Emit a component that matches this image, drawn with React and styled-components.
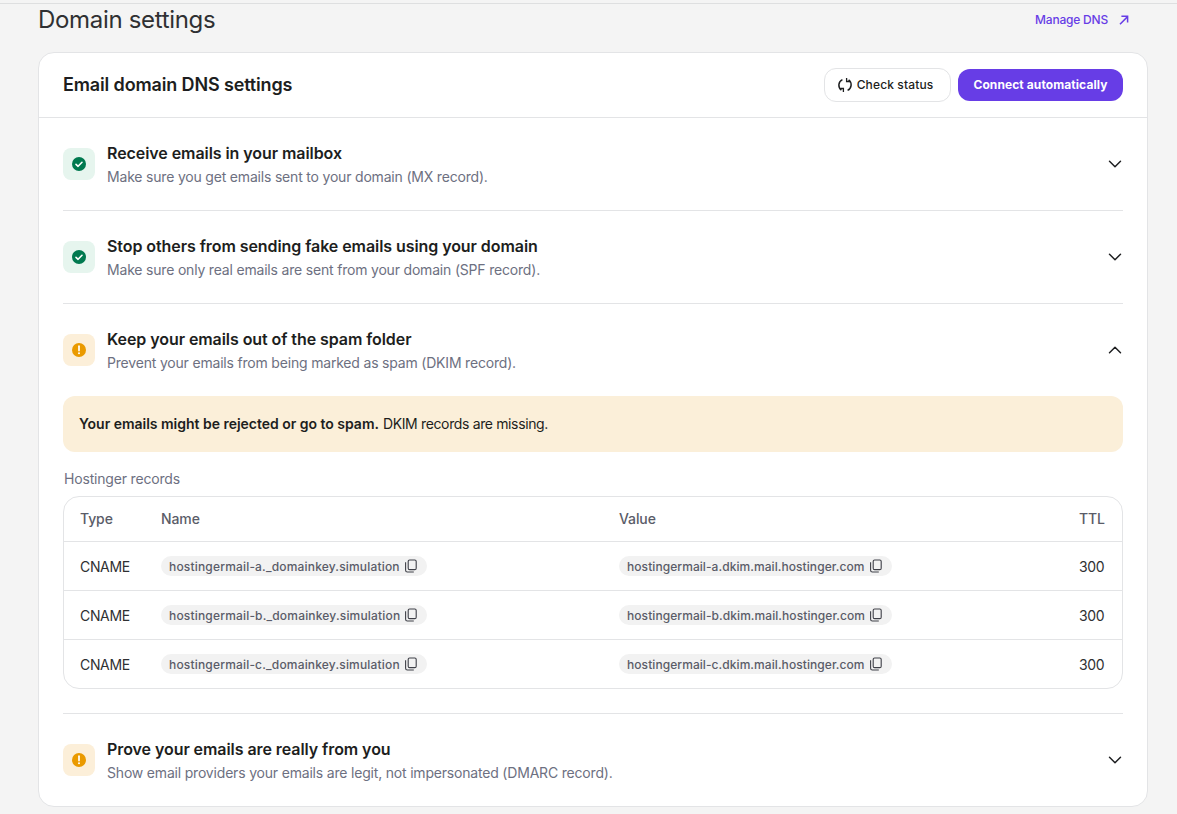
import React from 'react';
import styled, { createGlobalStyle } from 'styled-components';
import { ChevronDown, ChevronUp } from 'lucide-react';

const GlobalStyle = createGlobalStyle`
  html, body {
    margin: 0;
    padding: 0;
    background: #f4f4f4;
  }
  body {
    font-family: "Inter", "Liberation Sans", sans-serif;
    color: #1d1e20;
  }
  * {
    box-sizing: border-box;
  }
`;

const Page = styled.div`
  height: 814px;
  overflow: hidden;
  padding-top: 3px;
`;

const Content = styled.div`
  border-top: 1px solid #dedfe0;
  padding: 0 29px 0 38px;
`;

const TitleBar = styled.div`
  height: 48px;
  display: flex;
  align-items: flex-start;
  justify-content: space-between;
`;

const Title = styled.h1`
  margin: 0;
  font-size: 24px;
  line-height: 32px;
  font-weight: 400;
  letter-spacing: -0.32px;
  color: #2f3032;
`;

const ManageLink = styled.a`
  display: flex;
  align-items: center;
  gap: 10px;
  margin: 8px 18px 0 0;
  font-size: 12px;
  line-height: 16px;
  font-weight: 500;
  letter-spacing: -0.2px;
  color: #673de6;
`;

const Card = styled.section`
  background: #fff;
  border: 1px solid #e3e4e6;
  border-radius: 16px;
`;

const CardHeader = styled.header`
  height: 65px;
  padding: 0 24px;
  display: flex;
  align-items: center;
  justify-content: space-between;
  border-bottom: 1px solid #e3e4e6;
`;

const CardTitle = styled.h2`
  margin: 0;
  font-size: 18px;
  line-height: 24px;
  font-weight: 600;
  letter-spacing: -0.14px;
`;

const Actions = styled.div`
  display: flex;
  align-items: center;
  gap: 7px;
`;

const OutlineButton = styled.button`
  width: 127px;
  height: 34px;
  padding: 0 5px 0 0;
  display: flex;
  align-items: center;
  justify-content: center;
  gap: 4px;
  background: #fff;
  border: 1px solid #e3e4e6;
  border-radius: 12px;
  font: 500 12px/16px "Inter", sans-serif;
  letter-spacing: 0.13px;
  color: #1d1e20;
`;

const PrimaryButton = styled.button`
  width: 165px;
  height: 32px;
  padding: 0 0 1px;
  background: #673de6;
  border: 0;
  border-radius: 12px;
  font: 700 12px/16px "Inter", sans-serif;
  letter-spacing: 0.09px;
  color: #fff;
`;

const Body = styled.div`
  padding: 0 24px;
`;

const Section = styled.div`
  border-top: ${(p) => (p.$first ? '0' : '1px solid #e3e4e6')};
`;

const SectionHead = styled.div`
  height: 92px;
  display: flex;
  align-items: center;
  gap: 12px;
`;

const StatusBadge = styled.div`
  width: 32px;
  height: 32px;
  flex: none;
  display: flex;
  align-items: center;
  justify-content: center;
  border-radius: 8px;
  background: ${(p) => (p.$kind === 'ok' ? '#e6f5ee' : '#fcefd9')};
`;

const SectionText = styled.div`
  flex: 1;
`;

const SectionTitle = styled.div`
  font-size: 16px;
  line-height: 24px;
  font-weight: 600;
  letter-spacing: -0.07px;
  color: #1d1e20;
`;

const SectionSub = styled.div`
  font-size: 14px;
  line-height: 20px;
  margin-top: 2px;
  letter-spacing: -0.19px;
  color: #6d7081;
`;

const Chevron = styled.span`
  display: flex;
  margin-right: -3px;
  color: #1d1e20;
`;

const Alert = styled.div`
  height: 56px;
  padding: 0 16px 1px;
  display: flex;
  align-items: center;
  border-radius: 12px;
  background: #fbefd9;
  font-size: 14px;
  letter-spacing: -0.36px;
  color: #1d1e20;

  b {
    font-weight: 600;
    letter-spacing: -0.02px;
    margin-right: 4px;
  }
`;

const TableLabel = styled.div`
  margin: 17px 0 7px 1px;
  font-size: 14px;
  line-height: 20px;
  letter-spacing: -0.18px;
  color: #6d7081;
`;

const Table = styled.div`
  border: 1px solid #e3e4e6;
  border-radius: 16px;
  margin-bottom: 24px;
`;

const Row = styled.div`
  height: ${(p) => (p.$head ? '44px' : '49px')};
  padding: ${(p) => (p.$head ? '0 0 1px 16px' : '0 0 0 16px')};
  display: grid;
  grid-template-columns: 81px 458px 460px 1fr;
  align-items: center;
  border-top: ${(p) => (p.$head ? '0' : '1px solid #e3e4e6')};
  font-size: 14px;
  letter-spacing: ${(p) => (p.$head ? '-0.1px' : '-0.35px')};
  color: ${(p) => (p.$head ? '#5a5c68' : '#2f3032')};
  font-weight: ${(p) => (p.$head ? 500 : 400)};
`;

const Chip = styled.span`
  justify-self: start;
  height: 20px;
  padding: 0 9px 0 8px;
  display: inline-flex;
  align-items: center;
  gap: 4px;
  border-radius: 10px;
  background: #f2f2f2;
  font-size: 12px;
  font-weight: 500;
  letter-spacing: ${(p) => p.$spacing};
  color: #5a5c68;
`;

const CheckIcon = () => (
  <svg width="16" height="16" viewBox="0 0 16 16">
    <circle cx="8" cy="8" r="7" fill="#00794f" />
    <path d="M5 8.3l2.1 2L11 6.3" fill="none" stroke="#fff" strokeWidth="1.6" strokeLinecap="round" strokeLinejoin="round" />
  </svg>
);

const WarnIcon = () => (
  <svg width="16" height="16" viewBox="0 0 16 16">
    <circle cx="8" cy="8" r="7" fill="#ea9a00" />
    <path d="M8 4.2v4.4" fill="none" stroke="#fff" strokeWidth="1.7" strokeLinecap="round" />
    <circle cx="8" cy="11.3" r="1" fill="#fff" />
  </svg>
);

const SyncIcon = () => (
  <svg width="16" height="16" viewBox="0 0 16 16" fill="none" stroke="#1d1e20" strokeWidth="1.5">
    <path d="M4.4 13.2A6.2 6.2 0 0 1 5.4 2.6" />
    <path d="M11.6 2.8a6.2 6.2 0 0 1-1 10.6" />
    <path d="M9.6 0.9v3.6h3.6" strokeWidth="1.3" />
    <path d="M6.4 15.1v-3.6H2.8" strokeWidth="1.3" />
  </svg>
);

const ArrowIcon = () => (
  <svg width="12" height="12" viewBox="0 0 12 12" fill="none" stroke="#673de6" strokeWidth="1.5">
    <path d="M2 10.2 9.6 2.6" />
    <path d="M3.4 2.2h6.2v6.2" />
  </svg>
);

const CopyIcon = () => (
  <svg width="14" height="14" viewBox="0 0 14 14" fill="none" stroke="#3f4048" strokeWidth="1.1">
    <rect x="4.2" y="1" width="8" height="9.6" rx="1.4" />
    <path d="M1.6 3.2v8a1.8 1.8 0 0 0 1.8 1.8h6.4" />
  </svg>
);

const records = [
  { name: 'hostingermail-a._domainkey.simulation', value: 'hostingermail-a.dkim.mail.hostinger.com' },
  { name: 'hostingermail-b._domainkey.simulation', value: 'hostingermail-b.dkim.mail.hostinger.com' },
  { name: 'hostingermail-c._domainkey.simulation', value: 'hostingermail-c.dkim.mail.hostinger.com' },
];

const Head = ({ kind, title, sub, open }) => (
  <SectionHead>
    <StatusBadge $kind={kind}>{kind === 'ok' ? <CheckIcon /> : <WarnIcon />}</StatusBadge>
    <SectionText>
      <SectionTitle>{title}</SectionTitle>
      <SectionSub>{sub}</SectionSub>
    </SectionText>
    <Chevron>
      {open ? <ChevronUp size={22} strokeWidth={1.6} /> : <ChevronDown size={22} strokeWidth={1.6} />}
    </Chevron>
  </SectionHead>
);

export default function App() {
  return (
    <Page>
      <GlobalStyle />
      <Content>
        <TitleBar>
          <Title>Domain settings</Title>
          <ManageLink>Manage DNS <ArrowIcon /></ManageLink>
        </TitleBar>
        <Card>
          <CardHeader>
            <CardTitle>Email domain DNS settings</CardTitle>
            <Actions>
              <OutlineButton><SyncIcon /> Check status</OutlineButton>
              <PrimaryButton>Connect automatically</PrimaryButton>
            </Actions>
          </CardHeader>
          <Body>
            <Section $first>
              <Head kind="ok" title="Receive emails in your mailbox" sub="Make sure you get emails sent to your domain (MX record)." />
            </Section>
            <Section>
              <Head kind="ok" title="Stop others from sending fake emails using your domain" sub="Make sure only real emails are sent from your domain (SPF record)." />
            </Section>
            <Section>
              <Head kind="warn" open title="Keep your emails out of the spam folder" sub="Prevent your emails from being marked as spam (DKIM record)." />
              <Alert><b>Your emails might be rejected or go to spam.</b> DKIM records are missing.</Alert>
              <TableLabel>Hostinger records</TableLabel>
              <Table>
                <Row $head>
                  <span>Type</span>
                  <span>Name</span>
                  <span>Value</span>
                  <span>TTL</span>
                </Row>
                {records.map((r) => (
                  <Row key={r.name}>
                    <span>CNAME</span>
                    <Chip $spacing="0.18px">{r.name} <CopyIcon /></Chip>
                    <Chip $spacing="0.07px">{r.value} <CopyIcon /></Chip>
                    <span>300</span>
                  </Row>
                ))}
              </Table>
            </Section>
            <Section>
              <Head kind="warn" title="Prove your emails are really from you" sub="Show email providers your emails are legit, not impersonated (DMARC record)." />
            </Section>
          </Body>
        </Card>
      </Content>
    </Page>
  );
}
